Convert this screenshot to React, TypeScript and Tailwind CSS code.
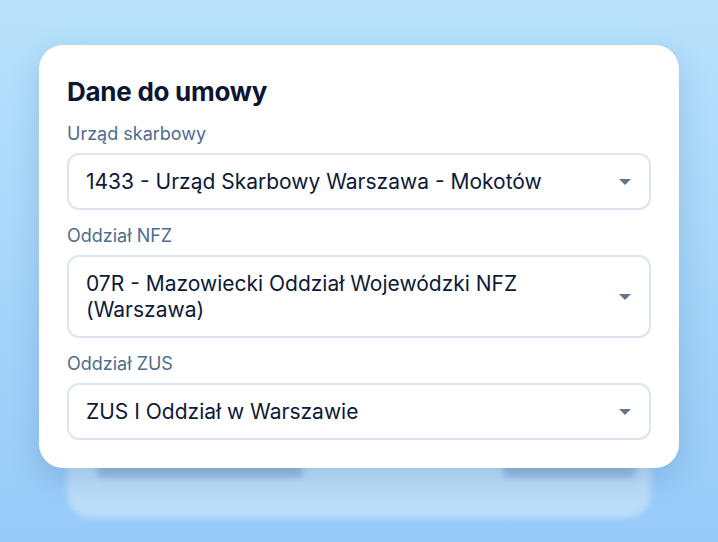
import { ReactNode } from "react";

const fields = [
  { label: "Urząd skarbowy", value: "1433 - Urząd Skarbowy Warszawa - Mokotów" },
  { label: "Oddział NFZ", value: "07R - Mazowiecki Oddział Wojewódzki NFZ (Warszawa)" },
  { label: "Oddział ZUS", value: "ZUS I Oddział w Warszawie" },
];

function Caret() {
  return (
    <svg width="12" height="6" viewBox="0 0 12 6" className="shrink-0">
      <polygon points="0,0 12,0 6,6" fill="#64748b" />
    </svg>
  );
}

function SelectBox({ children }: { children: ReactNode }) {
  return (
    <div className="flex items-center justify-between gap-6 rounded-xl border-2 border-[#dce5f0] bg-white py-[13.5px] pr-[18px] pl-[17px]">
      <span className="text-[21px] leading-[26px] text-[#0d1a38]">{children}</span>
      <Caret />
    </div>
  );
}

export default function App() {
  return (
    <div
      className="min-h-screen bg-linear-to-b from-[#b9e2fb] to-[#96caf8] px-[39px] pt-[45px] pb-6"
      style={{ fontFamily: "Inter, 'Noto Sans', sans-serif" }}
    >
      {/* Main card */}
      <div className="relative z-10 rounded-3xl bg-white px-7 pt-[31px] pb-7 shadow-[0_10px_30px_rgba(40,90,150,0.22)]">
        <h2 className="mb-[14px] text-[26px] leading-8 font-bold tracking-[-0.01em] text-[#0b1633]">
          Dane do umowy
        </h2>
        <div className="flex flex-col gap-[14px]">
          {fields.map((f) => (
            <div key={f.label}>
              <p className="mb-[7px] text-lg leading-6 text-[#4f6d8e]">{f.label}</p>
              <SelectBox>{f.value}</SelectBox>
            </div>
          ))}
        </div>
      </div>

      {/* Ghost card behind */}
      <div className="relative mx-7 -mt-[128px] h-[178px] rounded-3xl bg-white/35 blur-[3px]">
        <div className="flex h-full items-end justify-between pr-[15px] pb-[40px] pl-[30px]">
          <div className="h-5 w-[206px] rounded-md bg-[#86aed6]/70" />
          <div className="h-5 w-[133px] rounded-md bg-[#86aed6]/70" />
        </div>
      </div>
    </div>
  );
}
